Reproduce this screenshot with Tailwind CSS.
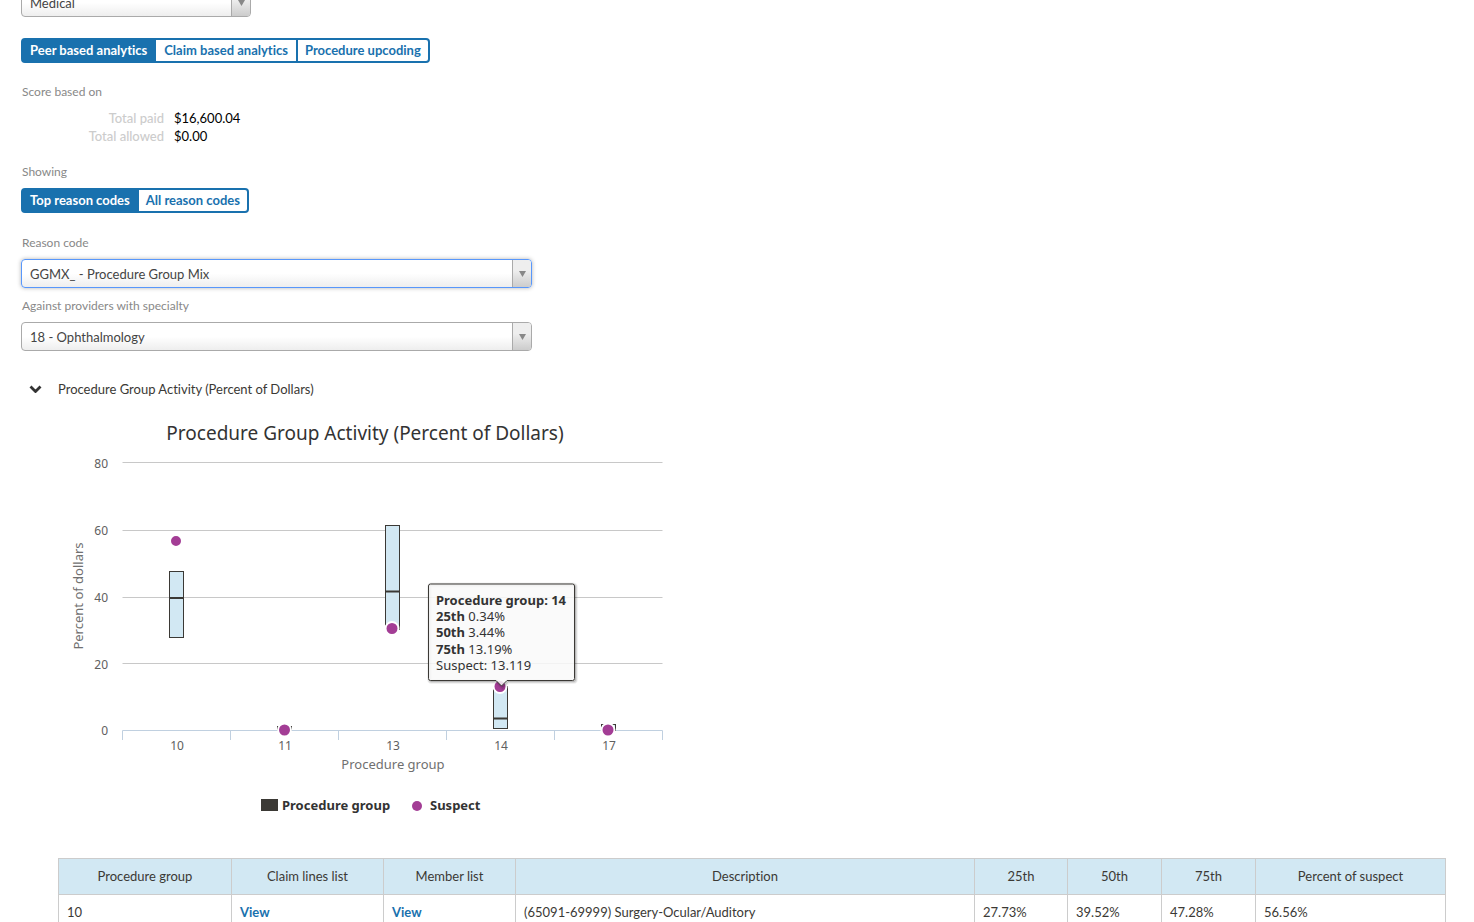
<!DOCTYPE html>
<html lang="en">
<head>
<meta charset="utf-8">
<title>Provider analytics</title>
<meta name="viewport" content="width=device-width, initial-scale=1">
<script src="https://cdn.jsdelivr.net/npm/@tailwindcss/browser@4"></script>
</head>
<body class="bg-white">
<main class="h-screen overflow-hidden pl-[21px] pr-7 font-['Lato',sans-serif] text-[13px] leading-[18px] text-[#3b3935] [font-variant-ligatures:none]">

  <div class="relative -mt-3 w-[230px]">
    <select aria-label="Claim type" class="block h-[29px] w-full appearance-none rounded border border-[#aaa] bg-linear-to-b from-white from-50% to-[#eee] px-2 text-[13px] text-[#444]">
      <option>Medical</option>
    </select>
    <span class="pointer-events-none absolute inset-y-px right-px flex w-[19px] items-center justify-center rounded-r-[3px] border-l border-[#aaa] bg-linear-to-t from-[#ccc] to-[#eee] to-60%">
      <svg class="h-[6px] w-[7px]" viewBox="0 0 7 6"><path d="M0 0h7L3.5 6z" fill="#888"/></svg>
    </span>
  </div>

  <div class="mt-[21px] flex font-bold text-[#1971ae]">
    <button class="h-[25px] rounded-l border-2 border-[#1971ae] bg-[#1971ae] px-[7px] pb-[2px] text-white">Peer based analytics</button>
    <button class="h-[25px] border-y-2 border-[#1971ae] px-2 pb-[2px]">Claim based analytics</button>
    <button class="h-[25px] rounded-r border-2 border-[#1971ae] px-[7px] pb-[2px]">Procedure upcoding</button>
  </div>

  <h2 class="mt-5 pl-px text-xs leading-[18px] text-[#888]">Score based on</h2>
  <dl class="mt-2 grid grid-cols-[143px_1fr] gap-x-[10px]">
    <dt class="text-right font-medium text-[#ccc]">Total paid</dt><dd class="text-black">$16,600.04</dd>
    <dt class="text-right font-medium text-[#ccc]">Total allowed</dt><dd class="text-black">$0.00</dd>
  </dl>

  <h2 class="mt-[18px] pl-px text-xs leading-[18px] text-[#888]">Showing</h2>
  <div class="mt-[7px] flex font-bold text-[#1971ae]">
    <button class="h-[25px] rounded-l border-2 border-[#1971ae] bg-[#1971ae] px-[7px] pb-[2px] text-white">Top reason codes</button>
    <button class="h-[25px] rounded-r border-2 border-l-0 border-[#1971ae] px-[7px] pb-[2px]">All reason codes</button>
  </div>

  <label for="reason" class="mt-[21px] block pl-px text-xs leading-[18px] text-[#888]">Reason code</label>
  <div class="relative mt-[7px] w-[511px]">
    <select id="reason" class="block h-[29px] w-full appearance-none rounded border border-[#5897fb] bg-linear-to-b from-white from-50% to-[#eee] px-2 text-[13px] text-[#444] shadow-[0_0_4px_rgba(0,0,0,0.3)]">
      <option>GGMX_ - Procedure Group Mix</option>
    </select>
    <span class="pointer-events-none absolute inset-y-px right-px flex w-[19px] items-center justify-center rounded-r-[3px] border-l border-[#aaa] bg-linear-to-t from-[#ccc] to-[#eee] to-60%">
      <svg class="h-[6px] w-[7px]" viewBox="0 0 7 6"><path d="M0 0h7L3.5 6z" fill="#888"/></svg>
    </span>
  </div>

  <label for="specialty" class="mt-[9px] block pl-px text-xs leading-[18px] text-[#888]">Against providers with specialty</label>
  <div class="relative mt-[7px] w-[511px]">
    <select id="specialty" class="block h-[29px] w-full appearance-none rounded border border-[#aaa] bg-linear-to-b from-white from-50% to-[#eee] px-2 text-[13px] text-[#444]">
      <option>18 - Ophthalmology</option>
    </select>
    <span class="pointer-events-none absolute inset-y-px right-px flex w-[19px] items-center justify-center rounded-r-[3px] border-l border-[#aaa] bg-linear-to-t from-[#ccc] to-[#eee] to-60%">
      <svg class="h-[6px] w-[7px]" viewBox="0 0 7 6"><path d="M0 0h7L3.5 6z" fill="#888"/></svg>
    </span>
  </div>

  <button aria-expanded="true" class="mt-[29px] flex items-center gap-4 pl-2 text-left">
    <svg class="h-2 w-[13px]" viewBox="0 0 13 8"><path d="M1.5 1.5l5 5 5-5" fill="none" stroke="#333" stroke-width="2.8"/></svg>
    Procedure Group Activity (Percent of Dollars)
  </button>

  <section class="pl-[37px]">
    <svg class="mt-[14px] h-[410px] w-[620px] font-['Noto_Sans',sans-serif]" viewBox="0 0 620 410" role="img" aria-label="Procedure Group Activity (Percent of Dollars)">
      <text x="307" y="28" text-anchor="middle" class="fill-[#333] text-[19px]">Procedure Group Activity (Percent of Dollars)</text>

      <path d="M64.5 50.5H604.5M64.5 118.5H604.5M64.5 185.5H604.5M64.5 251.5H604.5" stroke="#c8c8c8"/>
      <path d="M64.5 328V318.500H604.500V328M172.500 318V328M280.500 318V328M388.500 318V328M496.500 318V328" fill="none" stroke="#c0d0e0"/>

      <g text-anchor="end" class="fill-[#606060] text-[12px]">
        <text x="50" y="56">80</text><text x="50" y="123">60</text><text x="50" y="190">40</text><text x="50" y="257">20</text><text x="50" y="323">0</text>
      </g>
      <g text-anchor="middle" class="fill-[#606060] text-[12px]">
        <text x="119" y="338">10</text><text x="227" y="338">11</text><text x="335" y="338">13</text><text x="443" y="338">14</text><text x="551" y="338">17</text>
      </g>
      <g text-anchor="middle" class="fill-[#707070] text-[13px]">
        <text x="335" y="357">Procedure group</text>
        <text transform="translate(25 184) rotate(-90)">Percent of dollars</text>
      </g>

      <g fill="#d2e8f3" stroke="#3b3935">
        <rect x="111.500" y="159.500" width="14" height="66"/>
        <rect x="327.500" y="113.500" width="14" height="104"/>
        <rect x="219.500" y="314.500" width="14" height="4"/>
        <rect x="435.500" y="274.500" width="14" height="42"/>
        <rect x="543.500" y="312.500" width="14" height="6"/>
      </g>
      <path d="M111 186H126M327 179.500H342M435 306.500H450" stroke="#3b3935" stroke-width="2"/>

      <g fill="#a33d95" stroke="#fff" stroke-width="2">
        <circle cx="118" cy="129" r="6"/>
        <circle cx="226.500" cy="318" r="6.500"/>
        <circle cx="334" cy="216.500" r="6.500"/>
        <circle cx="442" cy="274.500" r="6.500"/>
        <circle cx="550" cy="318" r="6.500"/>
      </g>

      <defs>
        <path id="tip" d="M372.500 172H514.500a2 2 0 0 1 2 2V266.500a2 2 0 0 1-2 2H449L443.500 274L438 268.500H372.500a2 2 0 0 1-2-2V174a2 2 0 0 1 2-2z"/>
      </defs>
      <g fill="none" stroke="#000" transform="translate(1 1)">
        <use href="#tip" stroke-width="5" stroke-opacity=".05"/>
        <use href="#tip" stroke-width="3" stroke-opacity=".1"/>
        <use href="#tip" stroke-width="1" stroke-opacity=".15"/>
      </g>
      <use href="#tip" fill="#f9f9f9" fill-opacity=".85" stroke="#3b3935"/>
      <g class="fill-[#333] text-[13px]">
        <text x="378" y="193" class="font-bold">Procedure group: 14</text>
        <text x="378" y="209"><tspan class="font-bold">25th</tspan> 0.34%</text>
        <text x="378" y="225"><tspan class="font-bold">50th</tspan> 3.44%</text>
        <text x="378" y="242"><tspan class="font-bold">75th</tspan> 13.19%</text>
        <text x="378" y="258">Suspect: 13.119</text>
      </g>

      <rect x="203" y="387" width="17" height="12" fill="#3b3935"/>
      <circle cx="359" cy="394" r="5" fill="#a33d95"/>
      <g class="fill-[#333] text-[13px] font-bold">
        <text x="224" y="398">Procedure group</text><text x="372" y="398">Suspect</text>
      </g>
    </svg>

    <table class="mt-9 w-full table-fixed border-collapse text-left [&_td]:border [&_td]:border-[#ccc] [&_td]:p-2 [&_th]:border [&_th]:border-[#ccc] [&_th]:pt-2 [&_th]:pb-[9px] [&_th]:text-center [&_th]:font-normal">
      <colgroup><col class="w-[173px]"><col class="w-[152px]"><col class="w-[132px]"><col><col class="w-[93px]"><col class="w-[94px]"><col class="w-[94px]"><col class="w-[190px]"></colgroup>
      <thead class="bg-[#d2e8f3]">
        <tr><th>Procedure group</th><th>Claim lines list</th><th>Member list</th><th>Description</th><th>25th</th><th>50th</th><th>75th</th><th>Percent of suspect</th></tr>
      </thead>
      <tbody>
        <tr><td>10</td><td><a href="#" class="font-bold text-[#1971ae]">View</a></td><td><a href="#" class="font-bold text-[#1971ae]">View</a></td><td>(65091-69999) Surgery-Ocular/Auditory</td><td>27.73%</td><td>39.52%</td><td>47.28%</td><td>56.56%</td></tr>
      </tbody>
    </table>
  </section>
</main>
</body>
</html>
